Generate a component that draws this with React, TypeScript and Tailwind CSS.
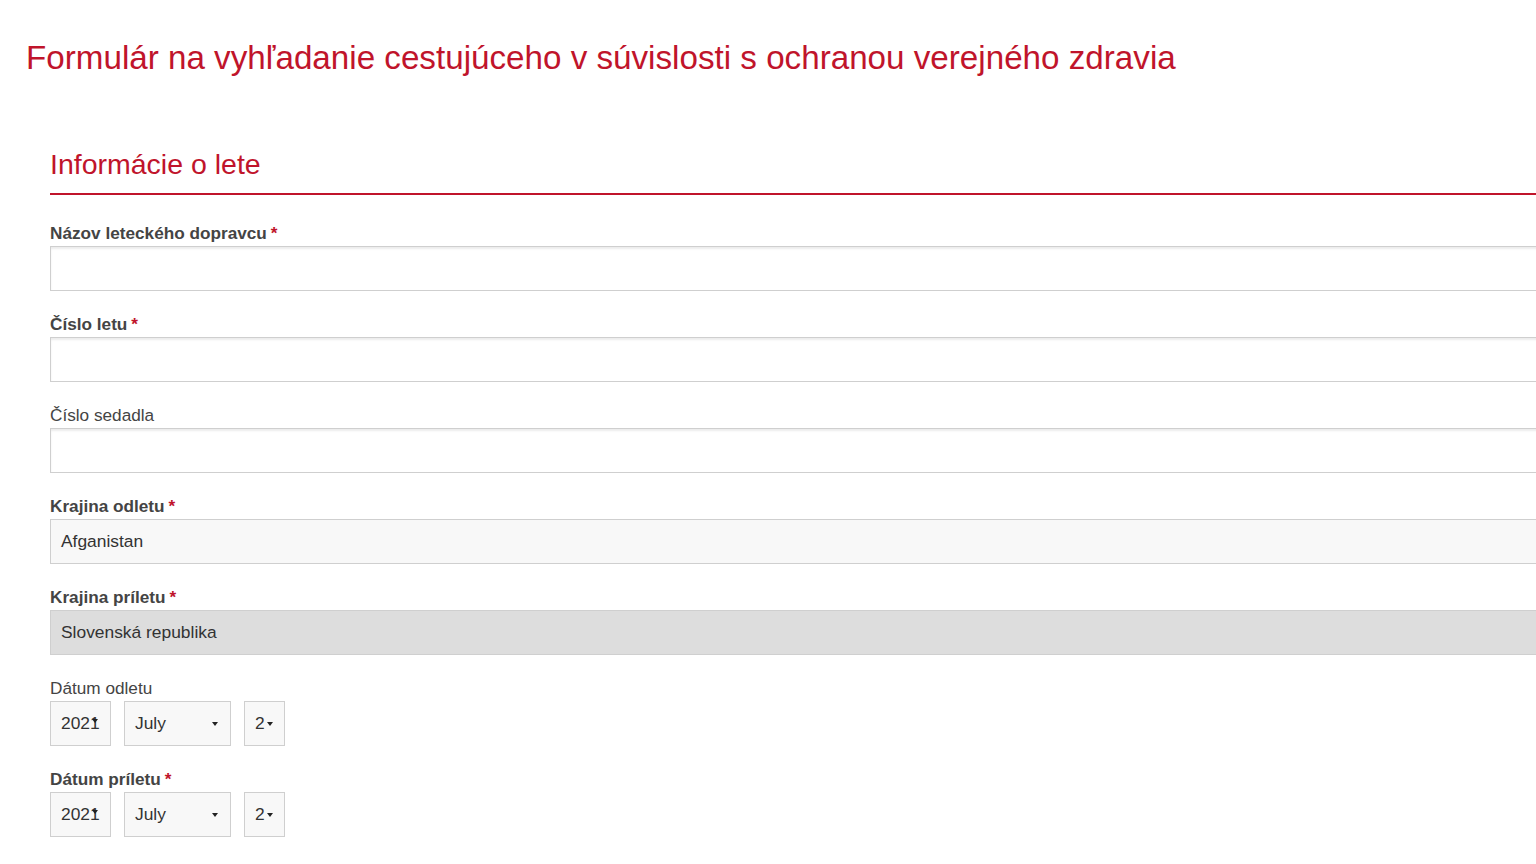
// Flight info form for locating a traveller (public health).

const font = { fontFamily: '"Liberation Sans", Arial, sans-serif' };

function Label({ text, required, bold = true }: { text: string; required?: boolean; bold?: boolean }) {
  return (
    <div className={`text-[17.2px] leading-5 text-[#444] ${bold ? 'font-bold' : ''}`}>
      {text}
      {required && <span className="text-[#c0142b] ml-1">*</span>}
    </div>
  );
}

function TextBox() {
  return (
    <div className="mt-[3px] h-[45px] w-full border border-[#cfcfcf] bg-white shadow-[inset_0_2px_2px_rgba(0,0,0,0.08)]" />
  );
}

function SelectBox({ value, disabled }: { value: string; disabled?: boolean }) {
  return (
    <div
      className={`mt-[3px] h-[45px] w-full border border-[#cfcfcf] flex items-center pl-[10px] text-[17.4px] text-[#333] ${
        disabled ? 'bg-[#dddddd]' : 'bg-[#f8f8f8]'
      }`}
    >
      {value}
    </div>
  );
}

function Caret() {
  return <span className="inline-block border-x-[3px] border-x-transparent border-t-[4px] border-t-[#222]" />;
}

function DateRow() {
  return (
    <div className="mt-[3px] flex gap-[13px]">
      <div className="relative h-[45px] w-[61px] border border-[#cfcfcf] bg-[#f8f8f8] flex items-center pl-[10px] text-[17.4px] text-[#333] overflow-hidden">
        2021
        <span className="absolute left-[41px] top-[17px] flex">
          <Caret />
        </span>
      </div>
      <div className="h-[45px] w-[107px] border border-[#cfcfcf] bg-[#f8f8f8] flex items-center justify-between pl-[10px] pr-[12px] text-[17.4px] text-[#333]">
        July
        <Caret />
      </div>
      <div className="h-[45px] w-[41px] border border-[#cfcfcf] bg-[#f8f8f8] flex items-center pl-[10px] gap-[2px] text-[17.4px] text-[#333]">
        2
        <Caret />
      </div>
    </div>
  );
}

export default function App() {
  return (
    <div className="min-h-screen bg-white overflow-hidden" style={font}>
      <h1 className="pl-[26px] pt-[38px] text-[33.2px] leading-10 text-[#c0142b]">
        Formulár na vyhľadanie cestujúceho v súvislosti s ochranou verejného zdravia
      </h1>

      <div className="ml-[50px] mt-[70px] w-[1520px]">
        <h2 className="text-[28.5px] leading-8 text-[#c0142b]">Informácie o lete</h2>
        <div className="mt-[13px] h-[2px] bg-[#c0142b]" />

        <div className="mt-[28px] flex flex-col gap-[23px]">
          <div>
            <Label text="Názov leteckého dopravcu" required />
            <TextBox />
          </div>
          <div>
            <Label text="Číslo letu" required />
            <TextBox />
          </div>
          <div>
            <Label text="Číslo sedadla" bold={false} />
            <TextBox />
          </div>
          <div>
            <Label text="Krajina odletu" required />
            <SelectBox value="Afganistan" />
          </div>
          <div>
            <Label text="Krajina príletu" required />
            <SelectBox value="Slovenská republika" disabled />
          </div>
          <div>
            <Label text="Dátum odletu" bold={false} />
            <DateRow />
          </div>
          <div>
            <Label text="Dátum príletu" required />
            <DateRow />
          </div>
        </div>
      </div>
    </div>
  );
}
